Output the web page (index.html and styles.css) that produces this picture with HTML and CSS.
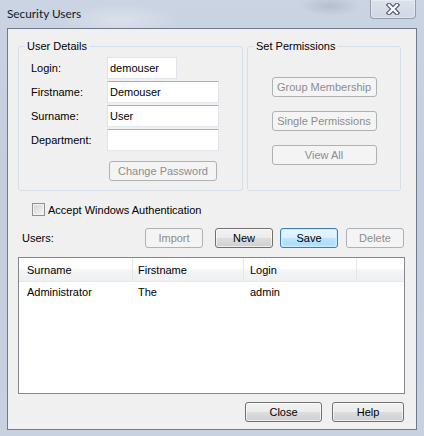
FILE: index.html
```html
<!DOCTYPE html>
<html>
<head>
<meta charset="utf-8">
<title>Security Users</title>
<link rel="stylesheet" href="styles.css">
</head>
<body>
<div class="window">
  <div class="titlebar">
    <span class="title">Security Users</span>
    <div class="close">
      <svg width="14" height="12" viewBox="0 0 14 12">
        <path d="M3 2 L11 10 M11 2 L3 10" stroke="#5a6270" stroke-width="4.6" stroke-linecap="square" fill="none"/>
        <path d="M3 2 L11 10 M11 2 L3 10" stroke="#ffffff" stroke-width="2.2" stroke-linecap="square" fill="none"/>
      </svg>
    </div>
  </div>
  <div class="client">
    <div class="groups">
      <fieldset class="group details">
        <legend>User Details</legend>
        <div class="form">
          <span class="lbl">Login:</span><div class="tb short">demouser</div>
          <span class="lbl">Firstname:</span><div class="tb">Demouser</div>
          <span class="lbl">Surname:</span><div class="tb">User</div>
          <span class="lbl">Department:</span><div class="tb"></div>
        </div>
        <div class="btn disabled cp">Change Password</div>
      </fieldset>
      <fieldset class="group perms">
        <legend>Set Permissions</legend>
        <div class="perm-list">
          <div class="btn disabled pbtn">Group Membership</div>
          <div class="btn disabled pbtn">Single Permissions</div>
          <div class="btn disabled pbtn">View All</div>
        </div>
      </fieldset>
    </div>
    <div class="check"><span class="box"></span><span>Accept Windows Authentication</span></div>
    <div class="usersbar">
      <span class="users-lbl">Users:</span>
      <div class="btn disabled b-import">Import</div>
      <div class="btn b-new">New</div>
      <div class="btn default b-save">Save</div>
      <div class="btn disabled b-delete">Delete</div>
    </div>
    <div class="list">
      <div class="lhead">
        <div class="hc c1">Surname</div>
        <div class="hc c2">Firstname</div>
        <div class="hc c3">Login</div>
        <div class="hc c4"></div>
      </div>
      <div class="lrow">
        <div class="c1">Administrator</div>
        <div class="c2">The</div>
        <div class="c3">admin</div>
        <div class="c4"></div>
      </div>
    </div>
    <div class="footer">
      <div class="btn b-close">Close</div>
      <div class="btn b-help">Help</div>
    </div>
  </div>
</div>
</body>
</html>
```

FILE: styles.css
```css
* { box-sizing: border-box; }
html, body { margin: 0; padding: 0; }
body {
  width: 424px;
  height: 436px;
  overflow: hidden;
  font-family: "Liberation Sans", Arial, sans-serif;
  font-size: 11px;
  color: #000;
}
.window {
  width: 424px;
  height: 436px;
  display: flex;
  flex-direction: column;
  padding: 0 7px 6px 7px;
  background:
    radial-gradient(ellipse 30px 10px at 330px 6px, rgba(130,140,160,0.3), rgba(130,140,160,0) 100%),
    radial-gradient(ellipse 60px 16px at 120px 20px, rgba(230,235,244,0.6), rgba(230,235,244,0) 100%),
    linear-gradient(#cbd4e2, #c3cddd 40%, #c8d1e0);
}
.titlebar {
  height: 28px;
  display: flex;
  align-items: flex-start;
}
.title {
  font-family: Lato, "Open Sans", sans-serif;
  font-size: 11.8px;
  line-height: 16px;
  padding-top: 6px;
  color: #101828;
}
.close {
  margin-left: auto;
  margin-right: 1px;
  width: 46px;
  height: 19px;
  border: 1px solid #959dab;
  border-top: none;
  border-radius: 0 0 4px 4px;
  background: linear-gradient(rgba(240,243,248,0.45), rgba(215,222,233,0.45));
  box-shadow: inset 0 0 0 1px rgba(255,255,255,0.35);
  display: flex;
  align-items: center;
  justify-content: center;
}
.client {
  flex: 1;
  border: 1px solid #6f7b8d;
  background: #f0f0f0;
  display: flex;
  flex-direction: column;
}
.groups {
  display: flex;
  gap: 4px;
  margin: 11px 0 0 10px;
}
.group {
  margin: 0;
  border: 1px solid #d5dfe5;
  border-radius: 3px;
  min-width: 0;
}
.group legend {
  padding: 0 2px;
  margin-left: 6px;
  line-height: 13px;
}
.details {
  width: 225px;
  padding: 4px 0 9px 0;
}
.perms {
  width: 154px;
  padding: 24px 0 0 0;
}
.form {
  display: grid;
  grid-template-columns: 76px auto;
  row-gap: 2px;
  padding-left: 12px;
  align-items: center;
}
.lbl { line-height: 22px; }
.tb {
  height: 22px;
  width: 112px;
  border: 1px solid;
  border-color: #abadb3 #e2e3ea #e3e9ef #e2e3ea;
  background: #fff;
  padding-left: 2px;
  line-height: 20px;
  white-space: nowrap;
}
.tb.short {
  width: 70px;
  border-color: #dfe3ea;
}
.btn {
  height: 20px;
  border: 1px solid #707070;
  border-radius: 3px;
  background: linear-gradient(#f2f2f2 0%, #ebebeb 50%, #dddddd 51%, #cfcfcf 100%);
  box-shadow: inset 0 0 0 1px rgba(255,255,255,0.65);
  color: #000;
  text-align: center;
  line-height: 18px;
  white-space: nowrap;
}
.btn.disabled {
  border-color: #adb2b5;
  background: #f4f4f4;
  box-shadow: none;
  color: #8d8d8d;
}
.btn.default {
  border-color: #3c7fb1;
  background: linear-gradient(#eaf6fd 0%, #d9f0fc 50%, #bee6fd 51%, #a7d9f5 100%);
  box-shadow: inset 0 0 0 1px #c5ecff, inset 0 0 2px 1px #e8f8ff;
}
.cp {
  width: 108px;
  margin: 10px 0 0 90px;
}
.perm-list {
  display: flex;
  flex-direction: column;
  align-items: center;
  gap: 14px;
}
.pbtn { width: 105px; }
.check {
  display: flex;
  align-items: center;
  gap: 3px;
  height: 13px;
  margin: 12px 0 0 24px;
}
.box {
  width: 13px;
  height: 13px;
  border: 1px solid #8e8f8f;
  background: linear-gradient(135deg, #cfd2d8, #f7f7f7);
  box-shadow: inset 0 0 0 1px #f4f4f4;
}
.usersbar {
  display: flex;
  align-items: center;
  height: 20px;
  margin: 12px 0 0 14px;
}
.users-lbl { width: 123px; }
.b-import { width: 58px; }
.b-new { width: 58px; margin-left: 12px; }
.b-save { width: 58px; margin-left: 7px; }
.b-delete { width: 58px; margin-left: 8px; }
.list {
  margin: 9px 0 0 10px;
  width: 387px;
  height: 137px;
  border: 1px solid #828790;
  background: #fff;
}
.lhead, .lrow {
  display: grid;
  grid-template-columns: 114px 111px 113px 1fr;
}
.lhead {
  height: 24px;
  border-bottom: 1px solid #e5e7ea;
  background: linear-gradient(#ffffff 0%, #ffffff 45%, #f3f4f6 55%, #eff0f2 100%);
}
.hc {
  line-height: 21px;
  padding-top: 2px;
  border-right: 1px solid #e3e5e8;
}
.hc.c4 { border-right: none; }
.lrow {
  height: 19px;
  line-height: 19px;
  padding-top: 1px;
}
.c1 { padding-left: 8px; }
.c2 { padding-left: 5px; }
.c3 { padding-left: 6px; }
.footer {
  display: flex;
  justify-content: flex-end;
  gap: 10px;
  margin: 8px 12px 0 0;
}
.b-close { width: 77px; }
.b-help { width: 72px; }
```
